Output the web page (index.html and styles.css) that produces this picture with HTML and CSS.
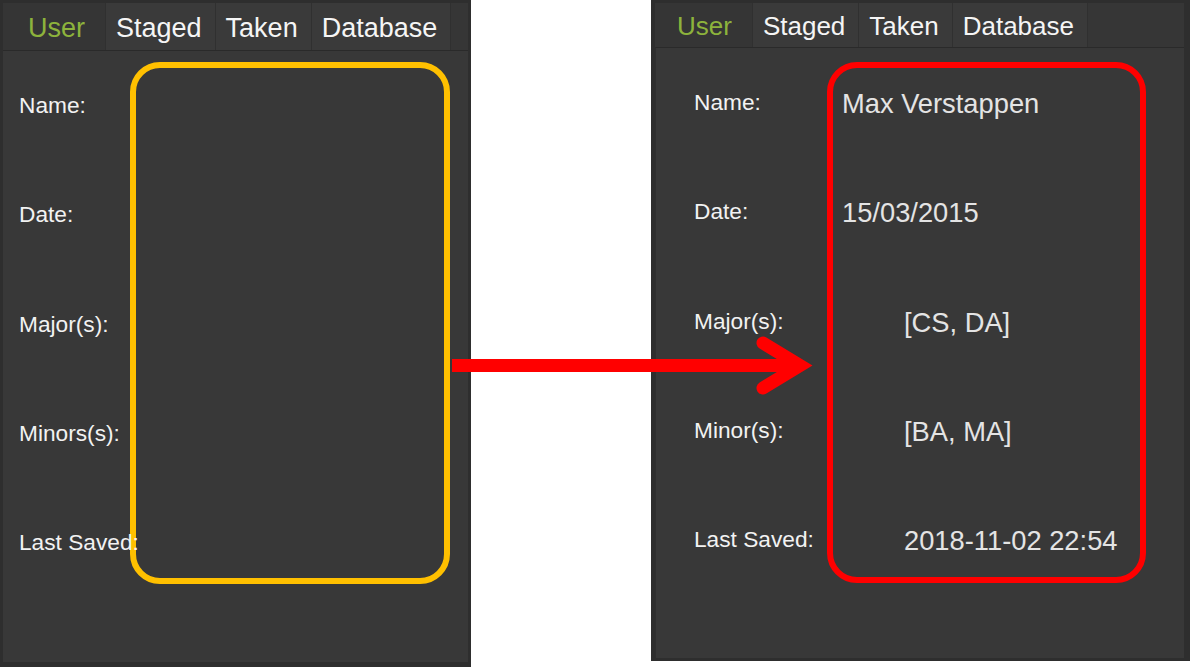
FILE: index.html
```html
<!DOCTYPE html>
<html lang="en">
<head>
<meta charset="utf-8">
<title>User panel before / after</title>
<link rel="stylesheet" href="styles.css">
</head>
<body>
<div class="page">
  <section class="panel panel--left">
    <nav class="tabs">
      <span class="tab tab--active">User</span>
      <span class="tab">Staged</span>
      <span class="tab">Taken</span>
      <span class="tab">Database</span>
    </nav>
    <div class="content">
      <div class="row"><span class="label">Name:</span></div>
      <div class="row"><span class="label">Date:</span></div>
      <div class="row"><span class="label">Major(s):</span></div>
      <div class="row"><span class="label">Minors(s):</span></div>
      <div class="row"><span class="label">Last Saved:</span></div>
    </div>
  </section>

  <section class="panel panel--right">
    <nav class="tabs">
      <span class="tab tab--active">User</span>
      <span class="tab">Staged</span>
      <span class="tab">Taken</span>
      <span class="tab">Database</span>
    </nav>
    <div class="content">
      <div class="row"><span class="label">Name:</span><span class="value">Max Verstappen</span></div>
      <div class="row"><span class="label">Date:</span><span class="value">15/03/2015</span></div>
      <div class="row"><span class="label">Major(s):</span><span class="value value--indent">[CS, DA]</span></div>
      <div class="row"><span class="label">Minor(s):</span><span class="value value--indent">[BA, MA]</span></div>
      <div class="row"><span class="label">Last Saved:</span><span class="value value--indent">2018-11-02 22:54</span></div>
    </div>
  </section>

  <div class="mark mark--yellow"></div>
  <div class="mark mark--red"></div>
  <svg class="arrow" width="380" height="70" viewBox="0 0 380 70" aria-hidden="true">
    <line x1="7" y1="35.5" x2="350" y2="35.5" stroke="#ff0000" stroke-width="13"/>
    <polyline points="318,13 355,35.5 318,58" fill="none" stroke="#ff0000" stroke-width="13" stroke-linecap="round" stroke-linejoin="miter" stroke-miterlimit="10"/>
  </svg>
</div>
</body>
</html>
```

FILE: styles.css
```css
* { box-sizing: border-box; }

html, body {
  margin: 0;
  padding: 0;
  background: #ffffff;
}

.page {
  position: relative;
  width: 1190px;
  height: 667px;
  display: flex;
  align-items: flex-start;
  gap: 180px;
  font-family: "Liberation Sans", Arial, sans-serif;
}

.panel {
  background: #383838;
  display: flex;
  flex-direction: column;
  border: 3px solid #2e2e2e;
}

.panel--left {
  width: 471px;
  height: 667px;
  border-bottom-width: 5px;
  --tab-size: 27px;
}

.panel--right {
  width: 539px;
  height: 661px;
  border-left-width: 4px;
  border-right-width: 6px;
  border-bottom-width: 3px;
  --tab-size: 26px;
}

.tabs {
  display: flex;
  background: #363636;
  flex: none;
}

.panel--left .tabs { height: 47px; }
.panel--right .tabs { height: 44px; }

.tab {
  display: flex;
  align-items: center;
  padding: 3px 13px 0 10px;
  font-size: var(--tab-size);
  color: #f5f5f5;
  background: #3a3a3a;
  border-right: 1px solid #303030;
}

.tab--active {
  color: #8db33c;
  background: #353535;
  padding: 3px 20px 0 25px;
}

.panel--right .tab--active { padding-left: 22px; padding-right: 20px; }

.content {
  flex: 1;
  border-top: 1px solid #2a2a2a;
  display: grid;
  grid-template-rows: repeat(5, 109.3px);
  align-content: start;
}

.panel--left .content { padding-left: 16px; }

.panel--right .content {
  padding-left: 38px;
  border-left: 1px solid #2f2f2f;
}

.row {
  display: flex;
  align-items: center;
}

.label {
  position: relative;
  z-index: 1;
  font-size: 22.7px;
  color: #f2f2f2;
}

.panel--right .label {
  width: 148px;
  flex: none;
}

.value {
  font-size: 27.3px;
  color: #e4e4e4;
  padding-top: 3px;
}

.value--indent { padding-left: 62px; }

/* annotation overlays */
.mark {
  position: absolute;
  top: 62px;
  height: 522px;
  border: 6.5px solid;
  border-radius: 30px;
}

.mark--yellow {
  left: 130px;
  width: 320px;
  border-color: #ffc000;
}

.mark--red {
  left: 827px;
  width: 319px;
  height: 521px;
  border-color: #ff0000;
}

.arrow {
  position: absolute;
  left: 445px;
  top: 330px;
}
```
